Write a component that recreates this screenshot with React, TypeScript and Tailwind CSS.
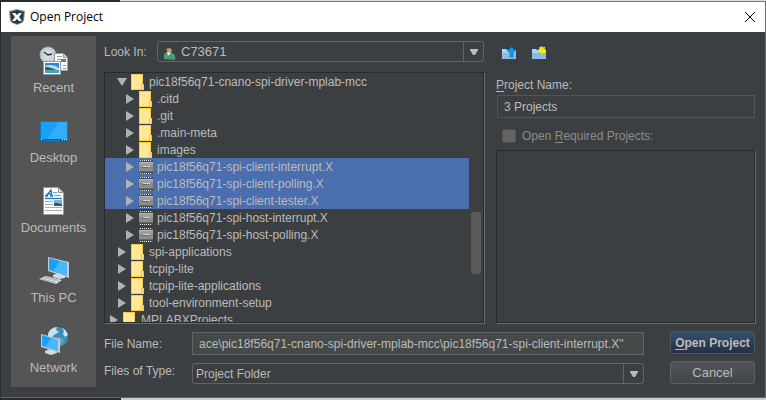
import type { ReactNode } from "react";

const project = "pic18f56q71-spi-";

type Row = {
  name: string;
  level: 0 | 1 | 2;
  kind: "folder" | "chip";
  open?: boolean;
  selected?: boolean;
};

const rows: Row[] = [
  { name: "pic18f56q71-cnano-spi-driver-mplab-mcc", level: 1, kind: "folder", open: true },
  { name: ".citd", level: 2, kind: "folder" },
  { name: ".git", level: 2, kind: "folder" },
  { name: ".main-meta", level: 2, kind: "folder" },
  { name: "images", level: 2, kind: "folder" },
  { name: project + "client-interrupt.X", level: 2, kind: "chip", selected: true },
  { name: project + "client-polling.X", level: 2, kind: "chip", selected: true },
  { name: project + "client-tester.X", level: 2, kind: "chip", selected: true },
  { name: project + "host-interrupt.X", level: 2, kind: "chip" },
  { name: project + "host-polling.X", level: 2, kind: "chip" },
  { name: "spi-applications", level: 1, kind: "folder" },
  { name: "tcpip-lite", level: 1, kind: "folder" },
  { name: "tcpip-lite-applications", level: 1, kind: "folder" },
  { name: "tool-environment-setup", level: 1, kind: "folder" },
  { name: "MPLABXProjects", level: 0, kind: "folder" },
];

const indent = ["pl-1", "pl-3", "pl-5"];

function AppLogo() {
  return (
    <svg width="16" height="16" viewBox="0 0 16 16" aria-hidden="true">
      <path d="M0 2 8 0l8 2-1 10-2 2-5 2-5-2-2-2z" fill="#8b979c" />
      <path d="M1 3 8 1l7 2-1 8-1 2-5 2-5-2-1-2z" fill="#263b44" />
      <path d="M3 4h3l2 2 2-2h3l-3 4 3 4h-3l-2-2-2 2H3l3-4z" fill="#fff" />
    </svg>
  );
}

function Arrow({ open }: { open?: boolean }) {
  return (
    <svg width="10" height="10" viewBox="0 0 10 10" fill="#afb1b3" aria-hidden="true">
      <path d={open ? "M0 1h10L5 9z" : "M1 0v10l8-5z"} />
    </svg>
  );
}

function DropArrow() {
  return (
    <span className="pointer-events-none flex h-full w-5 shrink-0 items-center justify-center border-l border-[#646464] pt-px">
      <svg width="8" height="6" viewBox="0 0 8 6" fill="#bbbbbb" aria-hidden="true">
        <path d="M0 0h8v1L5 6H3L0 1z" />
      </svg>
    </span>
  );
}

function FolderIcon() {
  return (
    <svg width="14" height="16" viewBox="0 0 14 16" aria-hidden="true">
      <path d="M0 0h12v10h1v6H0z" fill="#f5cb48" />
      <path d="M1 1h10v9h-1v5H1z" fill="#ffe796" />
      <path d="M11 11h1v4h-1z" fill="#ffe38a" />
    </svg>
  );
}

function ChipIcon() {
  return (
    <svg width="14" height="16" viewBox="0 0 14 16" aria-hidden="true">
      <path d="M0 1h14v14H0z" fill="#4b4b4b" />
      <path d="M1 1.500h12M1 14.500h12" stroke="#e9e9e9" strokeDasharray="1 1" />
      <path d="M0 3h14v10H0z" fill="#8a8c8d" />
      <path d="M0 3h14v1H0z" fill="#b6b8b9" />
      <path d="M0 4h14v3H0z" fill="#9c9e9f" />
      <path d="M0 12h14v1H0z" fill="#66696b" />
      <path d="M4 7h7v1H4z" fill="#d3d3d3" />
      <path d="M3 8h7v1H3z" fill="#6a6d6f" />
    </svg>
  );
}

function UserIcon() {
  return (
    <svg width="13" height="16" viewBox="0 0 13 16" className="shrink-0" aria-hidden="true">
      <path d="M1 15c-1-5 1-7 4-7l4 1c3 1 4 4 3 7z" fill="#4a9a78" />
      <path d="M4 8l1 4 3-3-2-2z" fill="#e8e8e4" />
      <path d="M3 3c1-2 5-2 6 0v4L7 9 4 7z" fill="#c69872" />
      <path d="M2 5c0-4 3-5 5-4 3 0 3 3 2 5L7 4z" fill="#473a2e" />
    </svg>
  );
}

function ToolFolder({ kind }: { kind: "up" | "new" }) {
  return (
    <svg width="18" height="16" viewBox="0 0 18 16" aria-hidden="true">
      <path d="M1 3h6l1 1h8v11H1z" fill="#174d74" />
      <path d="M2 4h4l1 1h9v9H2z" fill="#b3d1e8" />
      <path d="M2 8h14v6H2z" fill="#8fbadb" />
      {kind === "up" ? (
        <path d="M11.500 2 8 5.500V7h2v5h3V7h2V5.500z" fill="#0a9cf5" stroke="#0873bd" strokeWidth=".6" />
      ) : (
        <g>
          <circle cx="12" cy="5" r="3" fill="#fff200" />
          <path d="M12 1v8M8 5h8M9 2l6 6M15 2 9 8" stroke="#f1e21b" strokeWidth="1" />
        </g>
      )}
    </svg>
  );
}

function RecentIcon() {
  return (
    <svg width="32" height="32" viewBox="0 0 32 32" aria-hidden="true">
      <circle cx="10" cy="10" r="8" fill="#d4dbdf" stroke="#9caab1" />
      <circle cx="10" cy="10" r="6" fill="none" stroke="#7b888f" strokeDasharray="1 2.400" />
      <path d="m6 7 4 3 4-1" fill="none" stroke="#26343b" strokeWidth="1.500" />
      <path d="M16.500 8.500h9l4 4v13h-13z" fill="#f8f8f8" stroke="#9a9a9a" />
      <path d="M25.500 8.500v4h4" fill="#d0d0d0" stroke="#999" />
      <path d="M19 11.500h5M19 14.500h4M19 17.500h4M25 20.500h3M25 23.500h3" stroke="#999" />
      <path d="M23 14h5v3h-5z" fill="#3c86b8" />
      <path d="M5.500 16.500h17v13h-17z" fill="#fff" stroke="#999" />
      <path d="M7 18h14v10H7z" fill="#2f87d4" />
      <path d="M7 21c5-2 10-1 14 2v2H7z" fill="#b9dbea" />
      <path d="M7 22c6 0 9 2 11 3H7z" fill="#2c6a55" />
      <path d="M7 25h14v3H7z" fill="#4aa3bd" />
    </svg>
  );
}

function DesktopIcon() {
  return (
    <svg width="32" height="32" viewBox="0 0 32 32" aria-hidden="true">
      <path d="M2 6h28v20H2z" fill="#0a78c2" />
      <path d="M3 7h26v17H3z" fill="#18a0fb" />
      <path d="M21 7h8v17H9z" fill="#35abfb" />
      <path d="M3 24h26v1H3z" fill="#07598f" />
      <path d="M3 24h1v1H3zM24 24h1v1h-1zM26 24h1v1h-1zM28 24h1v1h-1z" fill="#fff" />
    </svg>
  );
}

function DocumentsIcon() {
  return (
    <svg width="32" height="32" viewBox="0 0 32 32" aria-hidden="true">
      <path d="M5.500 2.500h15l5 5v22h-20z" fill="#fbfbfb" stroke="#9b9b9b" />
      <path d="M20.500 2.500v5h5z" fill="#d9d9d9" stroke="#8c8c8c" />
      <path d="m8 11 5-6 1 6M10 9h4M7 11h3M12 11h3" fill="none" stroke="#1a79b8" strokeWidth="1.400" />
      <path d="M15 7.500h4M16 10.500h7" stroke="#54aede" />
      <path d="M7 13.500h17" stroke="#1682c4" strokeWidth="1.300" />
      <path d="M7 16.500h8M7 19.500h8M7 22.500h17M7 25.500h17" stroke="#aaa" />
      <path d="M16 15h8v6h-8z" fill="#78b2dc" />
      <path d="M16 18c3-1 5 1 8 1v2h-8z" fill="#315c56" />
    </svg>
  );
}

function PcIcon() {
  return (
    <svg width="32" height="32" viewBox="0 0 32 32" aria-hidden="true">
      <path d="m10 2 21 5v16L10 16z" fill="#c6cdd1" />
      <path d="m11 3 18 5v13l-18-6z" fill="#18a0fb" />
      <path d="m22 6 7 2v13l-14-5z" fill="#4ab7ff" />
      <path d="m15 20 5-2 7 3v2l-6 1-6-2z" fill="#d4d9dc" />
      <path d="m1 24 7-3 16 4-6 4z" fill="#dce0e2" />
      <path d="m4 24 14 4M7 22l14 4M5 25l6-3M9 26l6-3M13 27l6-3" stroke="#939b9f" strokeWidth=".6" />
    </svg>
  );
}

function NetworkIcon() {
  return (
    <svg width="32" height="32" viewBox="0 0 32 32" aria-hidden="true">
      <circle cx="20" cy="12" r="10" fill="#3d8eb4" />
      <path d="M10 9c1-4 5-7 9-7l-1 3 3 2-5 3-3 3-3-1zM24 3c3 1 5 4 6 7l-3 2-2-3 1-3z" fill="#c4e4ee" />
      <path d="M19 12l5 1 2 3-4 5-4-4z" fill="#62a8c4" />
      <path d="m3 9 19 5v14L3 22z" fill="#c6cdd1" />
      <path d="m4 10 16 5v11L4 21z" fill="#18a0fb" />
      <path d="m13 13 7 2v11L7 22z" fill="#4ab7ff" />
      <path d="m7 26 5-2 7 3v1l-6 2-6-2z" fill="#d4d9dc" />
    </svg>
  );
}

function Place({ label, children }: { label: string; children: ReactNode }) {
  return (
    <button type="button" className="flex h-[70px] flex-col items-center pt-[9px] text-[13px]">
      {children}
      <span className="mt-px leading-5">{label}</span>
    </button>
  );
}

const sunken = "border border-[#282a2c] outline-0 shadow-[1px_1px_0_#6a6c6d]";

export default function App() {
  return (
    <div className="flex h-screen min-h-96 flex-col bg-[#3c3f41] font-['Liberation_Sans',Arial,sans-serif] text-[12px] leading-4 text-[#bbbbbb]">
      <div className="flex h-[2px] shrink-0">
        <div className="w-[120px] bg-[#2b2b2e]" />
        <div className="flex-1 border-b border-[#777777] bg-[#dddddd]" />
      </div>

      <div className="flex min-h-0 flex-1 flex-col border border-t-0 border-l-[#292b2d] border-r-[#6e6e6e] border-b-[#646464]">
        <header className="flex h-[30px] shrink-0 items-center bg-white pr-[10px] pl-2 text-black">
          <AppLogo />
          <h1 className="ml-[5px] flex-1 font-['Open_Sans',sans-serif] text-[12px]">Open Project</h1>
          <button type="button" aria-label="Close">
            <svg width="10" height="10" viewBox="0 0 10 10" stroke="#000" aria-hidden="true">
              <path d="m0 0 10 10M10 0 0 10" />
            </svg>
          </button>
        </header>

        <div className="flex min-h-0 flex-1 gap-2 pt-1 pr-[10px] pl-[10px]">
          <nav className="mb-[10px] flex w-[85px] shrink-0 flex-col bg-[#555555]">
            <Place label="Recent"><RecentIcon /></Place>
            <Place label="Desktop"><DesktopIcon /></Place>
            <Place label="Documents"><DocumentsIcon /></Place>
            <Place label="This PC"><PcIcon /></Place>
            <Place label="Network"><NetworkIcon /></Place>
          </nav>

          <main className="flex min-w-0 flex-1 flex-col pb-[13px]">
            <div className="flex min-h-0 flex-1 gap-3">
              <section className="flex min-w-0 flex-1 flex-col pt-[5px]">
                <div className="flex h-[21px] items-center">
                  <label htmlFor="look" className="w-[53px] shrink-0">Look In:</label>
                  <div className="flex h-[21px] min-w-0 flex-1 items-center rounded-[3px] border border-[#646464] pl-[5px]">
                    <UserIcon />
                    <select id="look" className="ml-[5px] min-w-0 flex-1 appearance-none bg-transparent text-[13px] outline-none">
                      <option>C73671</option>
                    </select>
                    <DropArrow />
                  </div>
                </div>

                <div className={`mt-[10px] flex min-h-0 flex-1 overflow-hidden ${sunken}`}>
                  <ul className="min-w-0 flex-1">
                    {rows.map((row) => (
                      <li key={row.name} className={row.selected ? "bg-[#4b6eaf]" : ""}>
                        <button
                          type="button"
                          className={`flex h-[17px] w-full items-center whitespace-nowrap ${indent[row.level]}`}
                        >
                          <span className="mr-1 w-[10px] shrink-0">
                            <Arrow open={row.open} />
                          </span>
                          <span className="w-[18px] shrink-0">
                            {row.kind === "folder" ? <FolderIcon /> : <ChipIcon />}
                          </span>
                          {row.name}
                        </button>
                      </li>
                    ))}
                  </ul>
                  <div className="w-[14px] shrink-0 px-[2px] pt-[139px]">
                    <div className="h-[62px] rounded-[2px] bg-[#595959]" />
                  </div>
                </div>
              </section>

              <section className="flex w-[259px] shrink-0 flex-col pt-[9px]">
                <div className="flex gap-3 pl-[4px]">
                  <button type="button" aria-label="Up one level"><ToolFolder kind="up" /></button>
                  <button type="button" aria-label="New folder"><ToolFolder kind="new" /></button>
                </div>
                <label htmlFor="name" className="mt-4">
                  <span className="underline underline-offset-2">P</span>roject Name:
                </label>
                <input
                  id="name"
                  readOnly
                  defaultValue="3 Projects"
                  className="mt-[2px] ml-px h-[23px] border border-[#555555] bg-transparent px-[6px] outline-none"
                />
                <label className="mt-[10px] flex items-center pl-[6px] text-[#8c8c8c]">
                  <input
                    type="checkbox"
                    className="mr-[6px] size-[14px] appearance-none rounded-[2px] border border-[#515151] bg-[#636363]"
                  />
                  <span>
                    Open <span className="underline underline-offset-2">R</span>equired Projects:
                  </span>
                </label>
                <div className={`mt-[6px] flex-1 ${sunken}`} />
              </section>
            </div>

            <div className="mt-2 flex gap-[26px]">
              <div className="flex min-w-0 flex-1 flex-col gap-2">
                <div className="flex items-center pt-px">
                  <label htmlFor="file" className="w-[88px] shrink-0">File Name:</label>
                  <input
                    id="file"
                    readOnly
                    defaultValue={'ace\\pic18f56q71-cnano-spi-driver-mplab-mcc\\pic18f56q71-spi-client-interrupt.X"'}
                    className="h-[23px] min-w-0 flex-1 border border-[#646464] bg-[#45494a] px-[6px] outline-none"
                  />
                </div>
                <div className="flex items-start">
                  <label htmlFor="type" className="w-[88px] shrink-0">Files of Type:</label>
                  <div className="flex h-[21px] min-w-0 flex-1 items-center rounded-[3px] border border-[#646464]">
                    <select id="type" className="min-w-0 flex-1 appearance-none bg-transparent pl-[3px] outline-none">
                      <option>Project Folder</option>
                    </select>
                    <DropArrow />
                  </div>
                </div>
              </div>
              <div className="flex w-[85px] shrink-0 flex-col gap-[7px]">
                <button
                  type="submit"
                  className="h-[23px] rounded-[3px] border border-[#4c5560] bg-linear-to-b from-[#384f6b] to-[#233143] font-bold whitespace-nowrap"
                >
                  <span className="underline underline-offset-2">O</span>pen Project
                </button>
                <button
                  type="button"
                  className="h-[23px] rounded-[3px] border border-[#5e6061] bg-linear-to-b from-[#525658] to-[#414648] text-[13px]"
                >
                  Cancel
                </button>
              </div>
            </div>
          </main>
        </div>
      </div>

      <div className="flex h-[2px] shrink-0">
        <div className="w-[121px] bg-[#2b2b2e]" />
        <div className="flex-1 bg-[#cccccc]" />
      </div>
    </div>
  );
}
